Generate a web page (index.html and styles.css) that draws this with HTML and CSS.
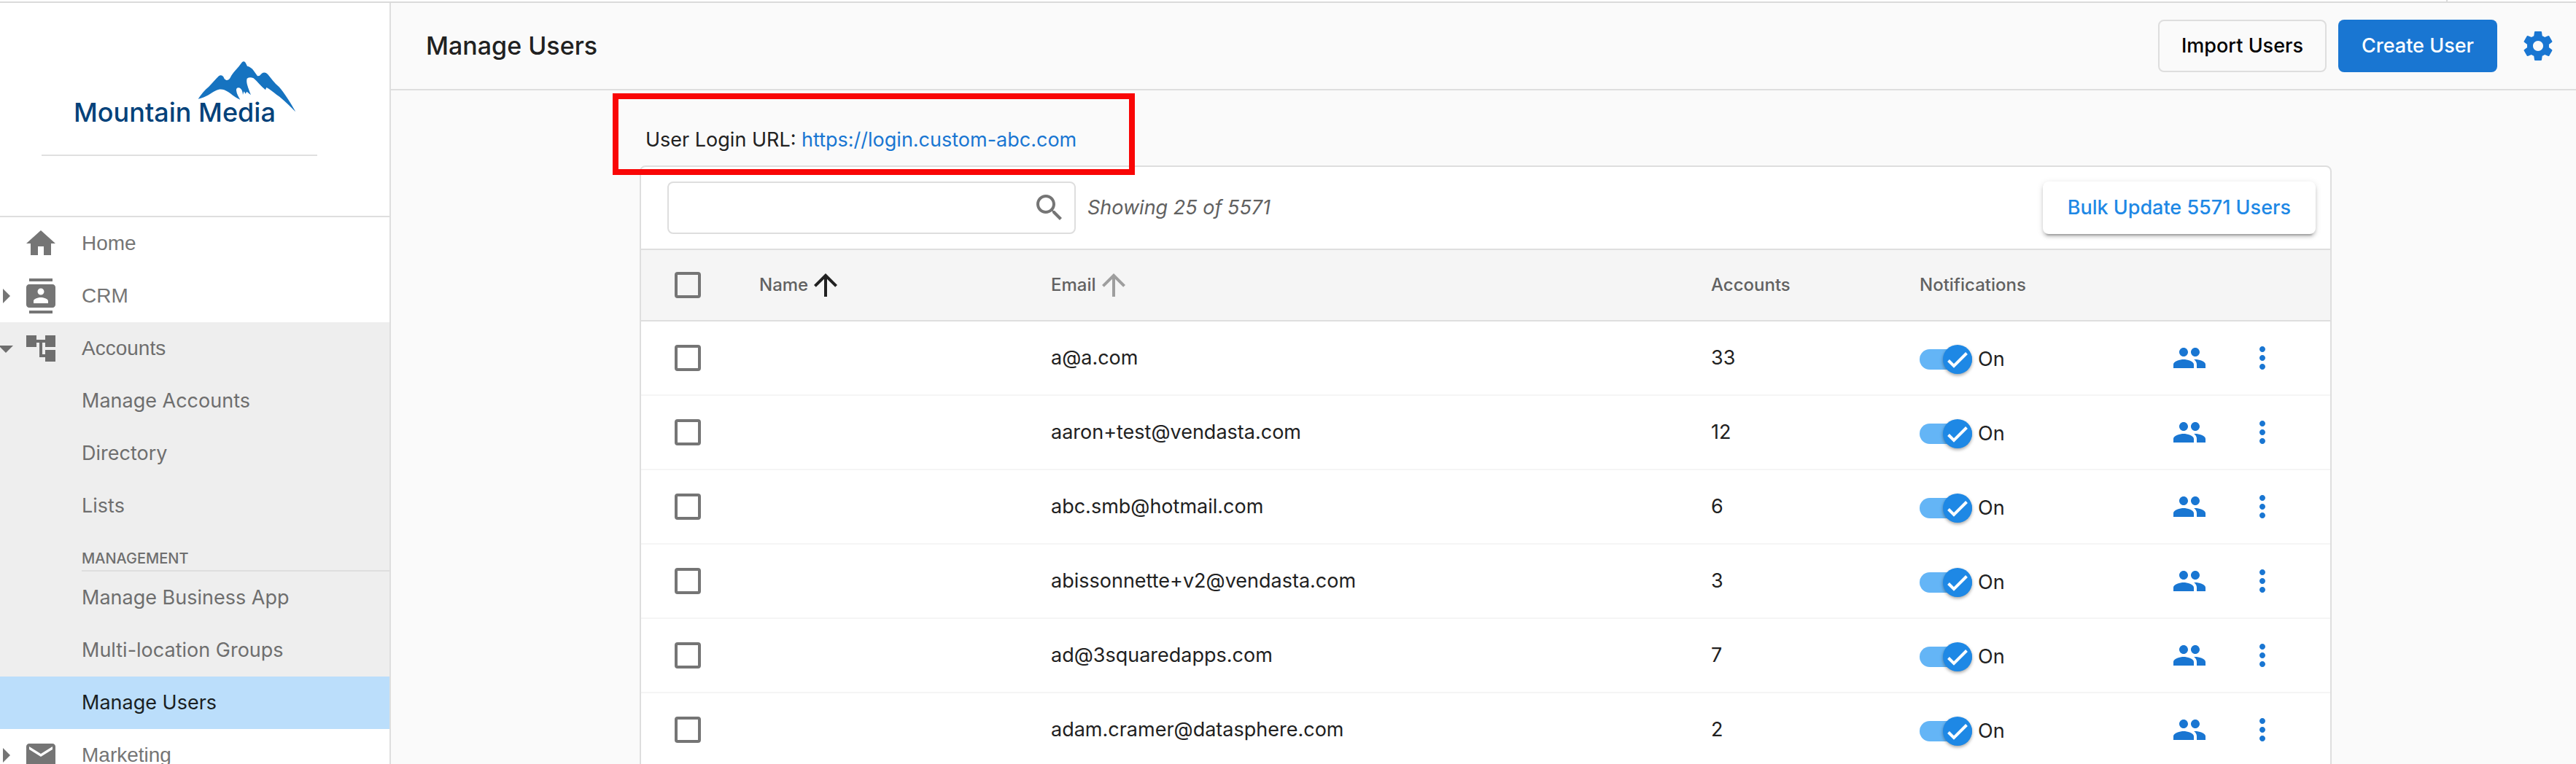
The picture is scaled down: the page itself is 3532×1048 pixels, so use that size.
FILE: index.html
```html
<!DOCTYPE html>
<html lang="en">
<head>
<meta charset="utf-8">
<meta name="viewport" content="width=device-width, initial-scale=1">
<title>Manage Users</title>
<link rel="stylesheet" href="styles.css">
</head>
<body>
<svg class="sprite" aria-hidden="true">
  <symbol id="i-home" viewBox="0 0 24 24"><path d="M10 20v-6h4v6h5v-8h3L12 3 2 12h3v8z"/></symbol>
  <symbol id="i-contacts" viewBox="0 0 24 24"><path d="M20 0H4v2h16V0zM4 24h16v-2H4v2zM20 4H4c-1.1 0-2 .9-2 2v12c0 1.1.9 2 2 2h16c1.1 0 2-.9 2-2V6c0-1.1-.9-2-2-2zm-8 2.750c1.240 0 2.250 1.010 2.250 2.250s-1.010 2.250-2.250 2.250S9.750 10.240 9.750 9 10.760 6.750 12 6.750zM17 17H7v-1.500c0-1.670 3.330-2.500 5-2.500s5 .830 5 2.500V17z"/></symbol>
  <symbol id="i-tree" viewBox="0 0 24 24"><path d="M22 11V3h-7v3H9V3H2v8h7V8h2v10h4v3h7v-8h-7v3h-2V8h2v3z"/></symbol>
  <symbol id="i-mail" viewBox="0 0 24 24"><path d="M20 4H4c-1.100 0-1.990.9-1.990 2L2 18c0 1.100.9 2 2 2h16c1.100 0 2-.9 2-2V6c0-1.100-.9-2-2-2zm0 4l-8 5-8-5V6l8 5 8-5v2z"/></symbol>
  <symbol id="i-right" viewBox="8 0 16 24"><path d="M10 17l5-5-5-5z"/></symbol>
  <symbol id="i-down" viewBox="8 0 16 24"><path d="M7 10l5 5 5-5z"/></symbol>
  <symbol id="i-gear" viewBox="0 0 24 24"><path d="M19.430 12.980c.040-.320.070-.640.070-.980s-.030-.660-.070-.980l2.110-1.650c.190-.150.240-.420.120-.640l-2-3.460c-.120-.220-.390-.3-.610-.220l-2.490 1c-.520-.4-1.080-.730-1.690-.980l-.380-2.650C14.460 2.180 14.250 2 14 2h-4c-.250 0-.460.180-.490.420l-.380 2.650c-.610.250-1.170.590-1.690.980l-2.490-1c-.230-.090-.490 0-.610.220l-2 3.460c-.130.220-.070.490.120.640l2.110 1.650c-.040.320-.070.650-.070.980s.030.660.070.980l-2.110 1.650c-.190.150-.240.420-.120.640l2 3.460c.120.220.390.3.610.220l2.490-1c.520.4 1.080.730 1.690.980l.380 2.650c.030.240.240.420.490.420h4c.250 0 .460-.180.490-.420l.380-2.650c.610-.250 1.170-.590 1.690-.980l2.490 1c.230.090.490 0 .610-.220l2-3.460c.120-.220.070-.490-.120-.640l-2.110-1.650zM12 15.500c-1.930 0-3.500-1.570-3.500-3.500s1.570-3.500 3.500-3.500 3.500 1.570 3.500 3.500-1.570 3.500-3.500 3.500z"/></symbol>
  <symbol id="i-search" viewBox="0 0 24 24"><path d="M15.500 14h-.790l-.280-.270C15.410 12.590 16 11.110 16 9.500 16 5.910 13.090 3 9.500 3S3 5.910 3 9.500 5.910 16 9.500 16c1.610 0 3.090-.590 4.230-1.570l.270.280v.790l5 4.990L20.490 19l-4.990-5zm-6 0C7.010 14 5 11.990 5 9.500S7.010 5 9.500 5 14 7.010 14 9.500 11.990 14 9.500 14z"/></symbol>
  <symbol id="i-up" viewBox="0 0 24 24"><path d="M4 12l1.410 1.410L11 7.830V20h2V7.830l5.580 5.590L20 12l-8-8-8 8z"/></symbol>
  <symbol id="i-people" viewBox="0 0 24 24"><path d="M16 11c1.660 0 2.990-1.340 2.990-3S17.660 5 16 5s-3 1.340-3 3 1.340 3 3 3zm-8 0c1.660 0 2.990-1.340 2.990-3S9.660 5 8 5 5 6.340 5 8s1.340 3 3 3zm0 2c-2.330 0-7 1.170-7 3.500V19h14v-2.500c0-2.330-4.670-3.500-7-3.500zm8 0c-.290 0-.620.020-.970.050 1.160.840 1.970 1.970 1.970 3.450V19h6v-2.500c0-2.330-4.670-3.500-7-3.500z"/></symbol>
  <symbol id="i-more" viewBox="0 0 24 24"><path d="M12 8c1.100 0 2-.9 2-2s-.9-2-2-2-2 .9-2 2 .9 2 2 2zm0 2c-1.100 0-2 .9-2 2s.9 2 2 2 2-.9 2-2-.9-2-2-2zm0 6c-1.100 0-2 .9-2 2s.9 2 2 2 2-.9 2-2-.9-2-2-2z"/></symbol>
  <symbol id="i-check" viewBox="0 0 40 40"><path d="M7.500 21.500l7.500 7.500L32.500 11.500" fill="none" stroke="#fff" stroke-width="4"/></symbol>
</svg>

<div class="topbar"><span class="topbar-divider"></span></div>

<div class="app">
  <aside class="sidebar">
    <div class="brand">
      <div class="brand-frame">
        <svg class="logo" viewBox="0 0 280 92" role="img" aria-label="Mountain Media">
          <g transform="translate(150 -10) scale(.3333)">
            <path class="logo-peak" d="M62 197C75 178 90 160 105 148C120 132 135 115 147 103Q158 96 166 106Q170 118 178 120Q188 122 193 112C200 95 215 80 228 65L243 46Q251 38 257 48L264 62Q280 66 290 80L306 103Q315 104 324 92Q336 83 348 95C362 112 375 130 395 148C415 170 440 210 463 250C440 228 415 200 385 180C370 168 355 155 343 150L339 160C320 145 305 125 290 112Q275 105 263 113C258 130 268 150 279 181L262 167L257 176L251 166Q248 172 246 180C245 165 240 152 228 151Q218 152 219 162C221 178 228 188 235 200C220 195 200 178 185 168C165 155 150 155 135 163C115 172 95 192 62 197Z"/>
          </g>
          <text class="logo-text" x="0" y="87">Mountain Media</text>
        </svg>
      </div>
    </div>
    <nav class="nav">
      <a class="nav-item nav-home" href="#"><svg class="icon"><use href="#i-home"/></svg><span>Home</span></a>
      <a class="nav-item" href="#"><svg class="caret"><use href="#i-right"/></svg><svg class="icon"><use href="#i-contacts"/></svg><span>CRM</span></a>
      <div class="nav-group">
        <a class="nav-item" href="#"><svg class="caret"><use href="#i-down"/></svg><svg class="icon"><use href="#i-tree"/></svg><span>Accounts</span></a>
        <a class="nav-sub" href="#">Manage Accounts</a>
        <a class="nav-sub" href="#">Directory</a>
        <a class="nav-sub" href="#">Lists</a>
        <h2 class="nav-heading">MANAGEMENT</h2>
        <a class="nav-sub" href="#">Manage Business App</a>
        <a class="nav-sub" href="#">Multi-location Groups</a>
        <a class="nav-sub nav-active" href="#">Manage Users</a>
      </div>
      <a class="nav-item" href="#"><svg class="caret"><use href="#i-right"/></svg><svg class="icon"><use href="#i-mail"/></svg><span>Marketing</span></a>
    </nav>
  </aside>

  <main class="main">
    <header class="page-header">
      <h1>Manage Users</h1>
      <button class="btn btn-outline" type="button">Import Users</button>
      <button class="btn btn-primary" type="button">Create User</button>
      <button class="icon-btn gear" type="button" aria-label="Settings"><svg class="icon"><use href="#i-gear"/></svg></button>
    </header>

    <div class="content">
      <div class="login-url">
        User Login URL: <a href="#">https://login.custom-abc.com</a>
        <span class="highlight"></span>
      </div>
      <section class="card">
        <div class="toolbar">
          <label class="search">
            <input type="search" aria-label="Search users">
            <svg class="icon"><use href="#i-search"/></svg>
          </label>
          <em class="count">Showing 25 of 5571</em>
          <button class="btn btn-raised" type="button">Bulk Update 5571 Users</button>
        </div>
        <table class="users">
          <colgroup><col class="c-check"><col class="c-name"><col class="c-email"><col class="c-accounts"><col class="c-notify"><col class="c-people"><col class="c-more"></colgroup>
          <thead>
            <tr>
              <th class="check"><input class="box" type="checkbox" aria-label="Select all"></th>
              <th><span class="sort sort-on">Name <svg class="icon"><use href="#i-up"/></svg></span></th>
              <th><span class="sort">Email <svg class="icon"><use href="#i-up"/></svg></span></th>
              <th>Accounts</th>
              <th>Notifications</th>
              <th></th>
              <th></th>
            </tr>
          </thead>
          <tbody>
            <tr>
              <td class="check"><input class="box" type="checkbox" aria-label="Select a@a.com"></td><td></td><td>a@a.com</td><td>33</td>
              <td><label class="switch"><span class="switch-body"><input type="checkbox" role="switch" checked><svg class="thumb"><use href="#i-check"/></svg></span>On</label></td>
              <td><button class="icon-btn" type="button" aria-label="Accounts"><svg class="icon"><use href="#i-people"/></svg></button></td>
              <td><button class="icon-btn" type="button" aria-label="More"><svg class="icon"><use href="#i-more"/></svg></button></td>
            </tr>
            <tr>
              <td class="check"><input class="box" type="checkbox" aria-label="Select aaron+test@vendasta.com"></td><td></td><td>aaron+test@vendasta.com</td><td>12</td>
              <td><label class="switch"><span class="switch-body"><input type="checkbox" role="switch" checked><svg class="thumb"><use href="#i-check"/></svg></span>On</label></td>
              <td><button class="icon-btn" type="button" aria-label="Accounts"><svg class="icon"><use href="#i-people"/></svg></button></td>
              <td><button class="icon-btn" type="button" aria-label="More"><svg class="icon"><use href="#i-more"/></svg></button></td>
            </tr>
            <tr>
              <td class="check"><input class="box" type="checkbox" aria-label="Select abc.smb@hotmail.com"></td><td></td><td>abc.smb@hotmail.com</td><td>6</td>
              <td><label class="switch"><span class="switch-body"><input type="checkbox" role="switch" checked><svg class="thumb"><use href="#i-check"/></svg></span>On</label></td>
              <td><button class="icon-btn" type="button" aria-label="Accounts"><svg class="icon"><use href="#i-people"/></svg></button></td>
              <td><button class="icon-btn" type="button" aria-label="More"><svg class="icon"><use href="#i-more"/></svg></button></td>
            </tr>
            <tr>
              <td class="check"><input class="box" type="checkbox" aria-label="Select abissonnette+v2@vendasta.com"></td><td></td><td>abissonnette+v2@vendasta.com</td><td>3</td>
              <td><label class="switch"><span class="switch-body"><input type="checkbox" role="switch" checked><svg class="thumb"><use href="#i-check"/></svg></span>On</label></td>
              <td><button class="icon-btn" type="button" aria-label="Accounts"><svg class="icon"><use href="#i-people"/></svg></button></td>
              <td><button class="icon-btn" type="button" aria-label="More"><svg class="icon"><use href="#i-more"/></svg></button></td>
            </tr>
            <tr>
              <td class="check"><input class="box" type="checkbox" aria-label="Select ad@3squaredapps.com"></td><td></td><td>ad@3squaredapps.com</td><td>7</td>
              <td><label class="switch"><span class="switch-body"><input type="checkbox" role="switch" checked><svg class="thumb"><use href="#i-check"/></svg></span>On</label></td>
              <td><button class="icon-btn" type="button" aria-label="Accounts"><svg class="icon"><use href="#i-people"/></svg></button></td>
              <td><button class="icon-btn" type="button" aria-label="More"><svg class="icon"><use href="#i-more"/></svg></button></td>
            </tr>
            <tr>
              <td class="check"><input class="box" type="checkbox" aria-label="Select adam.cramer@datasphere.com"></td><td></td><td>adam.cramer@datasphere.com</td><td>2</td>
              <td><label class="switch"><span class="switch-body"><input type="checkbox" role="switch" checked><svg class="thumb"><use href="#i-check"/></svg></span>On</label></td>
              <td><button class="icon-btn" type="button" aria-label="Accounts"><svg class="icon"><use href="#i-people"/></svg></button></td>
              <td><button class="icon-btn" type="button" aria-label="More"><svg class="icon"><use href="#i-more"/></svg></button></td>
            </tr>
          </tbody>
        </table>
      </section>
    </div>
  </main>
</div>
</body>
</html>
```
FILE: styles.css
```css
:root {
  --line: #dedede;
  --blue: #1976d2;
  --text: #212121;
  --muted: #757575;
  --ui: Inter, "Open Sans", sans-serif;
}

* { box-sizing: border-box; }

body {
  margin: 0;
  height: 100vh;
  overflow: hidden;
  display: flex;
  flex-direction: column;
  background: #fafafa;
  color: var(--text);
  font: 27px/32px var(--ui);
}

button, input { font: inherit; margin: 0; }
a { color: inherit; text-decoration: none; }
.sprite { display: none; }
.icon { width: 48px; height: 48px; flex: none; display: block; fill: currentColor; }

/* Strip along the top of the window */
.topbar {
  flex: none;
  display: flex;
  justify-content: flex-end;
  height: 4px;
  padding-right: 176px;
  background: #fff;
  border-bottom: 2px solid #dadada;
}
.topbar-divider { width: 2px; background: #dadada; }

.app { flex: 1; min-height: 0; display: flex; }

/* Sidebar */
.sidebar {
  flex: none;
  width: 536px;
  overflow: hidden;
  background: #fff;
  border-right: 2px solid var(--line);
}
.brand {
  height: 294px;
  padding: 0 99px 0 57px;
  border-bottom: 2px solid var(--line);
}
.brand-frame {
  height: 210px;
  padding: 76px 0 0 44px;
  border-bottom: 2px solid #e0e0e0;
}
.logo { display: block; width: 280px; height: 92px; overflow: visible; }
.logo-peak { fill: #1673c0; }
.logo-text { font: 500 36px Inter, sans-serif; fill: #03427a; }

.nav { color: var(--muted); }
.nav-item {
  display: flex;
  align-items: center;
  height: 72px;
  font: 28px/32px "Liberation Sans", Arial, sans-serif;
}
.nav-item .icon { margin-right: 32px; }
.nav-home { padding-left: 32px; }
.caret { width: 32px; height: 48px; flex: none; fill: currentColor; }
.nav-group { background: #eee; color: #6e6e6e; }
.nav-sub {
  display: flex;
  align-items: center;
  height: 72px;
  padding-left: 112px;
}
.nav-active { background: #bbdefb; color: #1a1f23; }
.nav-heading {
  margin: 0 0 0 112px;
  height: 54px;
  padding-top: 24px;
  border-bottom: 2px solid var(--line);
  font-size: 20px;
  line-height: 24px;
  font-weight: 500;
}

/* Page header */
.main { flex: 1; min-width: 0; overflow: hidden; }
.page-header {
  display: flex;
  align-items: center;
  gap: 16px;
  height: 120px;
  padding: 0 28px 0 48px;
  border-bottom: 2px solid var(--line);
}
.page-header h1 {
  flex: 1;
  margin: 0;
  font-size: 34px;
  line-height: 40px;
  font-weight: 500;
}
.btn {
  height: 72px;
  padding: 0 30px;
  border: 2px solid transparent;
  border-radius: 8px;
  background: none;
  font-weight: 500;
  cursor: pointer;
}
.btn-outline { border-color: var(--line); color: #000; }
.btn-primary { background: var(--blue); color: #fff; }
.btn-raised {
  margin-left: auto;
  padding: 0 32px;
  background: #fff;
  color: #1e88e5;
  box-shadow: 0 6px 2px -4px rgba(0, 0, 0, .2), 0 4px 4px rgba(0, 0, 0, .14), 0 2px 10px rgba(0, 0, 0, .12);
}
.icon-btn {
  display: block;
  padding: 0;
  border: 0;
  background: none;
  color: var(--blue);
  cursor: pointer;
}
.gear { margin-left: 16px; }

/* Login address with its callout frame */
.content { max-width: 2416px; margin: 0 auto; padding: 52px 45px 0 51px; }
.login-url { position: relative; padding: 0 0 19px 8px; }
.login-url a { color: var(--blue); }
.highlight {
  position: absolute;
  z-index: 1;
  left: -37px;
  top: -48px;
  width: 716px;
  height: 112px;
  border: 8px solid #f90606;
  pointer-events: none;
}

/* Users card */
.card {
  background: #fff;
  border: 2px solid var(--line);
  border-radius: 8px;
  overflow: hidden;
}
.toolbar {
  display: flex;
  align-items: center;
  gap: 16px;
  padding: 20px 20px 20px 36px;
}
.search {
  display: flex;
  align-items: center;
  width: 560px;
  height: 72px;
  padding-right: 10px;
  border: 2px solid var(--line);
  border-radius: 8px;
  color: var(--muted);
}
.search input {
  flex: 1;
  min-width: 0;
  height: 100%;
  padding: 0 16px;
  border: 0;
  outline: 0;
  background: none;
}
.count { color: #616161; }

.users { width: 100%; table-layout: fixed; border-collapse: separate; border-spacing: 0; }
.c-check { width: 162px; }
.c-name { width: 400px; }
.c-accounts { width: 286px; }
.c-notify { width: 346px; }
.c-people { width: 100px; }
.c-more { width: 117px; }
.users th, .users td { padding: 0; text-align: left; vertical-align: middle; }
.users th {
  height: 100px;
  background: #f5f5f5;
  border: solid var(--line);
  border-width: 2px 0;
  color: #616161;
  font-size: 24px;
  font-weight: 500;
}
.users td { height: 102px; border-bottom: 2px solid #f5f5f5; }
.users .check { padding-left: 46px; }
.sort { display: flex; align-items: center; color: #616161; }
.sort .icon { color: #9e9e9e; }
.sort-on .icon { color: var(--text); }

.box {
  display: block;
  appearance: none;
  width: 36px;
  height: 36px;
  border: 4px solid var(--muted);
  border-radius: 4px;
}
.box:checked { background: var(--blue); border-color: var(--blue); }

/* Notification switch */
.switch { display: flex; align-items: center; gap: 8px; padding-top: 4px; }
.switch-body { display: grid; align-items: center; width: 72px; }
.switch-body > * { grid-area: 1 / 1; }
.switch-body input {
  appearance: none;
  width: 72px;
  height: 28px;
  border-radius: 14px;
  background: #bdbdbd;
}
.switch-body input:checked { background: #64b5f6; }
.thumb {
  justify-self: end;
  width: 40px;
  height: 40px;
  border-radius: 50%;
  background: #1e88e5;
  box-shadow: 0 2px 4px rgba(0, 0, 0, .35);
  pointer-events: none;
}
```
